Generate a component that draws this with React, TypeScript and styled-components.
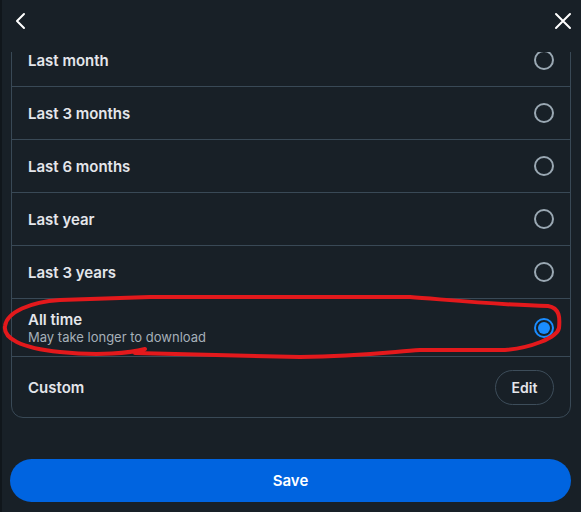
import { useLayoutEffect, useRef } from "react";
import styled, { createGlobalStyle } from "styled-components";

const GlobalStyle = createGlobalStyle`
  html, body {
    margin: 0;
    background: #182027;
  }
  body {
    font-family: Inter, "Noto Sans", sans-serif;
    color: #e4e6eb;
  }
`;

const Page = styled.div`
  position: relative;
  height: 512px;
  display: flex;
  flex-direction: column;
  border-left: 2px solid #10161b;
  background: #182027;
  overflow: hidden;
`;

const Header = styled.div`
  height: 52px;
  flex-shrink: 0;
  display: flex;
  justify-content: space-between;
  align-items: flex-start;
  padding: 12px 9px 0 10px;
  box-sizing: border-box;
`;

const IconButton = styled.button`
  width: 18px;
  height: 18px;
  padding: 0;
  border: none;
  background: none;
  color: #ffffff;
  display: flex;
  align-items: center;
  justify-content: center;
  cursor: pointer;
`;

const Scroll = styled.div`
  flex: 1;
  overflow-y: auto;
  scrollbar-width: none;
  padding: 0 10px 0 9px;
  &::-webkit-scrollbar {
    display: none;
  }
`;

const Card = styled.div`
  border: 1px solid #394956;
  border-radius: 12px;
  margin-bottom: 60px;
`;

const Row = styled.label<{ $tall?: boolean }>`
  display: flex;
  align-items: center;
  justify-content: space-between;
  min-height: ${(p) => (p.$tall ? "57px" : "52px")};
  padding: 0 16px 0 16px;
  border-bottom: 1px solid #394956;
  cursor: pointer;
  &:last-child {
    border-bottom: none;
    min-height: 60px;
  }
`;

const Texts = styled.div`
  display: flex;
  flex-direction: column;
`;

const Title = styled.span`
  font-size: 15px;
  font-weight: 600;
  line-height: 19px;
  color: #e4e6eb;
`;

const Sub = styled.span`
  font-size: 13px;
  font-weight: 400;
  line-height: 17px;
  color: #a6b0b9;
`;

const Radio = styled.span<{ $on?: boolean }>`
  width: 20px;
  height: 20px;
  box-sizing: border-box;
  border-radius: 50%;
  border: 2px solid ${(p) => (p.$on ? "#1a8cff" : "#9aa8b3")};
  display: flex;
  align-items: center;
  justify-content: center;
  &::after {
    content: "";
    width: 12px;
    height: 12px;
    border-radius: 50%;
    background: ${(p) => (p.$on ? "#1a8cff" : "transparent")};
  }
`;

const EditButton = styled.button`
  width: 59px;
  height: 35px;
  border-radius: 18px;
  border: 1px solid #3d4d5a;
  background: transparent;
  color: #e4e6eb;
  font-family: inherit;
  font-size: 14px;
  font-weight: 600;
  cursor: pointer;
`;

const Footer = styled.div`
  flex-shrink: 0;
  padding: 0 10px 10px 8px;
`;

const SaveButton = styled.button`
  width: 100%;
  height: 43px;
  border: none;
  border-radius: 22px;
  background: #0064e0;
  color: #ffffff;
  font-family: inherit;
  font-size: 15px;
  font-weight: 600;
  cursor: pointer;
`;

const Scribble = styled.svg`
  position: absolute;
  left: -2px;
  top: 0;
  pointer-events: none;
`;

const options = [
  { label: "Last month" },
  { label: "Last 3 months" },
  { label: "Last 6 months" },
  { label: "Last year" },
  { label: "Last 3 years" },
  { label: "All time", sub: "May take longer to download", on: true },
];

export default function App() {
  const scrollRef = useRef<HTMLDivElement>(null);

  useLayoutEffect(() => {
    if (scrollRef.current) scrollRef.current.scrollTop = 19;
  }, []);

  return (
    <>
      <GlobalStyle />
      <Page>
        <Header>
          <IconButton aria-label="Back">
            <svg width="18" height="18" viewBox="0 0 18 18" fill="none">
              <path d="M12 2 L5 9 L12 16" stroke="currentColor" strokeWidth="2" strokeLinecap="round" strokeLinejoin="round" />
            </svg>
          </IconButton>
          <IconButton aria-label="Close">
            <svg width="18" height="18" viewBox="0 0 18 18" fill="none">
              <path d="M2 2 L16 16 M16 2 L2 16" stroke="currentColor" strokeWidth="2" strokeLinecap="round" />
            </svg>
          </IconButton>
        </Header>
        <Scroll ref={scrollRef}>
          <Card>
            {options.map((o) => (
              <Row key={o.label} $tall={!!o.sub}>
                <Texts>
                  <Title>{o.label}</Title>
                  {o.sub && <Sub>{o.sub}</Sub>}
                </Texts>
                <Radio $on={o.on} />
              </Row>
            ))}
            <Row>
              <Title>Custom</Title>
              <EditButton>Edit</EditButton>
            </Row>
          </Card>
        </Scroll>
        <Footer>
          <SaveButton>Save</SaveButton>
        </Footer>
        <Scribble width="581" height="512" viewBox="0 0 581 512">
          <path
            d="M145 349 C130 353 100 356 60 352 C20 348 3 338 5 326 C7 312 30 302 60 300 L150 297 L410 297 C450 300 500 305 548 306 C560 308 560 318 559 328 C557 338 530 348 505 350 L420 350 C390 352 360 356 300 357 L135 353"
            fill="none"
            stroke="#e3191c"
            strokeWidth="4"
            strokeLinecap="round"
            strokeLinejoin="round"
          />
        </Scribble>
      </Page>
    </>
  );
}
